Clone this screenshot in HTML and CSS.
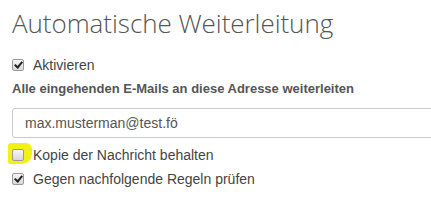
FILE: index.html
```html
<!DOCTYPE html>
<html lang="de">
<head>
    <meta charset="UTF-8">
    <title>Automatische Weiterleitung</title>
    <link rel="stylesheet" href="styles.css">
</head>
<body>

    <h1 class="title">Automatische Weiterleitung</h1>

    <label class="check first">
        <span class="box checked"></span>
        Aktivieren
    </label>

    <div class="label">Alle eingehenden E-Mails an diese Adresse weiterleiten</div>

    <div class="field">max.musterman@test.fö</div>

    <label class="check">
        <span class="marker"></span>
        <span class="box"></span>
        Kopie der Nachricht behalten
    </label>

    <label class="check">
        <span class="box checked"></span>
        Gegen nachfolgende Regeln prüfen
    </label>

</body>
</html>
```

FILE: styles.css
```css
body {
    margin: 0;
    padding: 0 0 0 12px;
    background: #ffffff;
    font-family: "Liberation Sans", Arial, sans-serif;
    color: #444444;
    overflow: hidden;
}

.title {
    font-family: "Open Sans", sans-serif;
    font-weight: 300;
    font-size: 26px;
    color: #555555;
    margin: 4px 0 0 0;
    line-height: 38px;
    letter-spacing: -0.05px;
}

/* Checkbox rows */
.check {
    display: flex;
    align-items: center;
    gap: 9px;
    height: 24px;
    font-size: 14px;
    position: relative;
}

.check.first {
    margin-top: 11px;
}

.box {
    width: 10px;
    height: 10px;
    border: 1px solid #9a9a9a;
    border-radius: 2px;
    background: linear-gradient(#f6f6f6, #d8d8d8);
    position: relative;
    z-index: 1;
}

.box.checked::after {
    content: "";
    position: absolute;
    left: 3px;
    top: 0px;
    width: 3px;
    height: 6px;
    border: solid #222222;
    border-width: 0 2px 2px 0;
    transform: rotate(40deg);
}

/* yellow highlighter mark */
.marker {
    position: absolute;
    left: -4px;
    top: 0px;
    width: 24px;
    height: 21px;
    background: #f0f000;
    border-radius: 3px 6px 10px 2px;
    opacity: 0.9;
}

.label {
    font-weight: bold;
    font-size: 13px;
    color: #555555;
    margin-top: 2px;
    line-height: 20px;
}

.field {
    margin-top: 9px;
    margin-bottom: 5px;
    height: 30px;
    width: 460px;
    border: 1px solid #cccccc;
    border-radius: 3px;
    box-sizing: border-box;
    padding: 0 12px;
    line-height: 28px;
    font-size: 14px;
    color: #555555;
}
```
